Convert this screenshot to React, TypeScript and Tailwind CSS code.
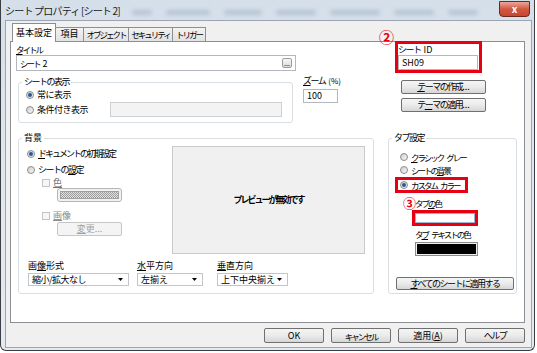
import React from "react";

const KN = "tracking-[-1.5px]";
const KS = "text-[8.5px] tracking-[-2px]";

const U = ({ children }: { children: React.ReactNode }) => (
  <span className="underline underline-offset-[1px]">{children}</span>
);

const Sp = () => <span className="inline-block w-[3px]" />;

function Radio({ checked }: { checked?: boolean }) {
  return (
    <span className="w-[8px] h-[8px] rounded-full border border-[#8b8b8b] bg-linear-to-br from-[#cfcfcf] to-[#f7f7f7] flex items-center justify-center shrink-0">
      {checked && <span className="w-[4px] h-[4px] rounded-full bg-[#24599a]" />}
    </span>
  );
}

function Check() {
  return <span className="w-[8px] h-[8px] border border-[#c4c4c4] bg-[#f6f6f6] shrink-0" />;
}

function Btn({ className, children, disabled }: { className?: string; children: React.ReactNode; disabled?: boolean }) {
  return (
    <div
      className={`flex items-center justify-center whitespace-nowrap rounded-[2px] border ${
        disabled
          ? "border-[#c6c6c6] bg-[#f4f4f4] text-[#a2a2a2]"
          : "border-[#707070] bg-linear-to-b from-[#f5f5f5] via-[#ebebeb] to-[#d6d6d6]"
      } ${className ?? ""}`}
    >
      {children}
    </div>
  );
}

function Select({ className, value }: { className?: string; value: string }) {
  return (
    <div className={`flex items-center justify-between border border-[#c2c6cc] bg-white pl-[3px] pr-[5px] ${className ?? ""}`}>
      <span className="whitespace-nowrap">{value}</span>
      <svg width="5" height="3" viewBox="0 0 5 3">
        <path d="M0 0 H5 L2.5 3 Z" fill="#000" />
      </svg>
    </div>
  );
}

const TAB = "h-[14px] border-t border-r border-[#8c8e94] bg-linear-to-b from-[#f3f3f3] to-[#e2e2e2] flex items-center justify-center pb-[1px]";

export default function App() {
  return (
    <div className="w-[537px] h-[353px] bg-white overflow-hidden text-black text-[9px] leading-[12px] font-['Noto_Sans_CJK_JP',sans-serif]">
      <div className="w-[535px] h-[351px] flex flex-col border-x border-b border-[#3a3f45] rounded-b-[6px] bg-linear-to-b from-[#d5dfea] via-[#e1e7ee] to-[#e6eaef]">
        {/* title bar */}
        <div className="h-[20px] flex items-start shrink-0">
          <div className="ml-[4px] mt-[4px] text-[10px] leading-[14px] tracking-[-0.8px] text-[#1a1a1a] whitespace-nowrap">シート プロパティ [シート 2]</div>
          <div className="flex items-center mt-[10px] ml-[12px] gap-[14px] opacity-60">
            <span className="w-[20px] h-[5px] rounded-full bg-[#9fb0c2] blur-[2px]" />
            <span className="w-[44px] h-[5px] rounded-full bg-[#9fb0c2] blur-[2px]" />
            <span className="w-[38px] h-[5px] rounded-full bg-[#9fb0c2] blur-[2px]" />
            <span className="w-[40px] h-[5px] rounded-full bg-[#9fb0c2] blur-[2px]" />
            <span className="w-[50px] h-[5px] rounded-full bg-[#9fb0c2] blur-[2px]" />
            <span className="w-[40px] h-[5px] rounded-full bg-[#9fb0c2] blur-[2px]" />
            <span className="w-[30px] h-[5px] rounded-full bg-[#9fb0c2] blur-[2px]" />
          </div>
          <div className="ml-auto mr-[4px] mt-[1px] w-[31px] h-[16px] rounded-b-[4px] border border-[#6b2a20] bg-linear-to-b from-[#e9a897] via-[#d05843] to-[#c9452f] flex items-center justify-center text-white text-[10px] font-bold leading-none">
            x
          </div>
        </div>

        {/* client */}
        <div className="ml-[4px] w-[527px] h-[328px] border border-[#9aa5b1] bg-[#f0f0f0] flex flex-col">
          {/* tabs */}
          <div className="h-[20px] flex items-end pl-[6px] shrink-0 whitespace-nowrap">
            <div className="relative z-10 -mb-px w-[44px] h-[19px] border-x border-t border-[#8c8e94] bg-white flex items-center justify-center">
              基本設定
            </div>
            <div className={`w-[28px] ${TAB}`}>項目</div>
            <div className={`w-[45px] ${TAB}`}>
              <span className={KS}>オブジェクト</span>
            </div>
            <div className={`w-[44px] ${TAB}`}>
              <span className={KS}>セキュリティ</span>
            </div>
            <div className={`w-[33px] ${TAB}`}>
              <span className={KS}>トリガー</span>
            </div>
          </div>

          {/* panel */}
          <div className="ml-[4px] w-[515px] h-[282px] border border-[#8c8e94] bg-white flex flex-col shrink-0">
            {/* top section */}
            <div className="flex">
              <div className="ml-[5px] w-[322px] flex flex-col">
                <div className={`mt-[1px] h-[12px] ${KS}`}>
                  <U>タ</U>イトル
                </div>
                <div className="w-[280px] h-[16px] border border-[#b3b7be] bg-white flex items-center justify-between pl-[3px] pr-[3px]">
                  <span className="whitespace-nowrap">
                    <span className={KS}>シート</span>
                    <Sp />2
                  </span>
                  <span className="w-[10px] h-[10px] border border-[#9c9c9c] rounded-[2px] bg-linear-to-b from-[#f7f7f7] to-[#dcdcdc] flex items-end justify-center text-[7px] leading-[7px]">
                    ...
                  </span>
                </div>
                <div className="mt-[5px] flex items-start">
                  <fieldset className="ml-[2px] w-[275px] h-[47px] border border-[#d9dee3] rounded-[3px] pl-[7px] pb-[4px]">
                    <legend className={`ml-[-4px] px-[2px] leading-[12px] ${KN}`}>シートの表示</legend>
                    <div className="mt-[1px] h-[12px] flex items-center gap-[3px]">
                      <Radio checked />
                      <span className="tracking-[-0.5px]">常に表示</span>
                    </div>
                    <div className="mt-[1px] flex items-center">
                      <div className="w-[84px] flex items-center gap-[3px]">
                        <Radio />
                        <span className="tracking-[-0.5px]">条件付き表示</span>
                      </div>
                      <div className="w-[172px] h-[15px] border border-[#cdd0d4] bg-[#f3f3f3]" />
                    </div>
                  </fieldset>
                  <div className="ml-[10px] w-[35px] flex flex-col">
                    <div className="-mt-px h-[12px] whitespace-nowrap">
                      <span className={KN}>
                        <U>ズ</U>ーム
                      </span>
                      <Sp />
                      <span className="text-[8px]">(%)</span>
                    </div>
                    <div className="mt-[2px] h-[14px] border border-[#b3b7be] bg-white pl-[3px] flex items-center">100</div>
                  </div>
                </div>
              </div>

              <div className="relative ml-[57px] -mt-px flex flex-col">
                <span className="absolute left-[-16px] top-[-12px] text-[15px] leading-[15px] font-bold text-[#e60012]">②</span>
                <div className="w-[87px] h-[32px] border-[3px] border-[#e60012] flex flex-col">
                  <div className="h-[11px] leading-[11px] whitespace-nowrap">
                    <span className={KN}>シート</span>
                    <Sp />
                    ID
                  </div>
                  <div className="w-[80px] h-[15px] border border-[#b3b7be] bg-white pl-[3px] flex items-center">SH09</div>
                </div>
                <Btn className="mt-[7px] ml-[6px] w-[85px] h-[14px]">
                  <span className={KN}>
                    <U>テ</U>ーマの作成
                  </span>
                  <span>...</span>
                </Btn>
                <Btn className="mt-[4px] ml-[6px] w-[85px] h-[14px]">
                  <span className={KN}>
                    テ<U>ー</U>マの適用
                  </span>
                  <span>...</span>
                </Btn>
              </div>
            </div>

            {/* bottom section */}
            <div className="mt-[9px] flex">
              <fieldset className="ml-[7px] w-[356px] h-[162px] border border-[#d9dee3] rounded-[3px]">
                <legend className="ml-[3px] px-[2px] leading-[12px]">背景</legend>
                <div className="flex">
                  <div className="ml-[8px] w-[145px] flex flex-col">
                    <div className="mt-[4px] h-[12px] flex items-center gap-[3px] whitespace-nowrap">
                      <Radio checked />
                      <span className="tracking-[-2px]">
                        <U>ド</U>キュメントの初期設定
                      </span>
                    </div>
                    <div className="mt-[4px] h-[12px] flex items-center gap-[3px]">
                      <Radio />
                      <span className={KN}>
                        シートの<U>設</U>定
                      </span>
                    </div>
                    <div className="mt-[1px] ml-[15px] h-[12px] flex items-center gap-[3px] text-[#6e6e6e]">
                      <Check />
                      <U>色</U>
                    </div>
                    <div className="-mt-px ml-[30px] w-[65px] h-[14px] rounded-[3px] border border-[#b5b5b5] bg-[#f2f2f2] p-[2px]">
                      <div className="w-full h-full border border-[#a0a0a0] bg-[image:repeating-conic-gradient(#9c9c9c_0%_25%,#e2e2e2_0%_50%)] bg-[length:2px_2px]" />
                    </div>
                    <div className="mt-[8px] ml-[15px] h-[12px] flex items-center gap-[3px] text-[#8a8a8a]">
                      <Check />
                      <span>
                        <U>画</U>像
                      </span>
                    </div>
                    <Btn disabled className="ml-[30px] w-[65px] h-[14px]">
                      <span>
                        <U>変</U>更...
                      </span>
                    </Btn>
                  </div>
                  <div className="mt-[2px] w-[193px] h-[108px] border border-[#cacaca] bg-[#f0f0f0] flex items-center justify-center font-bold">
                    <span className="tracking-[-2px]">プレビューが無効です</span>
                  </div>
                </div>
                <div className="mt-[6px] pl-[9px] flex">
                  <div className="w-[101px] flex flex-col">
                    <div className="h-[12px]">
                      画<U>像</U>形式
                    </div>
                    <Select className="mt-[1px] h-[13px] tracking-[-0.5px]" value="縮小/拡大なし" />
                  </div>
                  <div className="ml-[8px] w-[66px] flex flex-col">
                    <div className="h-[12px]">
                      <U>水</U>平方向
                    </div>
                    <Select className="mt-[1px] h-[13px]" value="左揃え" />
                  </div>
                  <div className="ml-[14px] w-[71px] flex flex-col">
                    <div className="h-[12px]">
                      <U>垂</U>直方向
                    </div>
                    <Select className="mt-[1px] h-[13px]" value="上下中央揃え" />
                  </div>
                </div>
              </fieldset>

              <fieldset className="ml-[14px] w-[129px] h-[162px] border border-[#d9dee3] rounded-[3px] pl-[6px]">
                <legend className={`ml-[-3px] px-[2px] leading-[12px] ${KN}`}>タブ設定</legend>
                <div className="mt-[7px] pl-[5px] h-[12px] flex items-center gap-[3px] whitespace-nowrap">
                  <Radio />
                  <span>
                    <span className={KS}>
                      <U>ク</U>ラシック
                    </span>
                    <Sp />
                    <span className={KS}>グレー</span>
                  </span>
                </div>
                <div className="mt-[1px] pl-[5px] h-[12px] flex items-center gap-[3px]">
                  <Radio />
                  <span className={KS}>
                    シートの<U>背</U>景
                  </span>
                </div>
                <div className="mt-[1px] w-[73px] h-[16px] border-[3px] border-[#e60012] pl-[2px] flex items-center gap-[3px] whitespace-nowrap">
                  <Radio checked />
                  <span className="leading-[10px]">
                    <span className={KS}>カスタム</span>
                    <Sp />
                    <span className={KS}>カラー</span>
                  </span>
                </div>
                <div className="relative mt-[4px] ml-[20px] h-[12px]">
                  <span className="absolute left-[-12px] top-[-1px] text-[13px] leading-[13px] font-bold text-[#e60012]">③</span>
                  <span className={KS}>
                    タブ<U>の</U>色
                  </span>
                </div>
                <div className="mt-[1px] ml-[17px] w-[66px] h-[16px] border-[3px] border-[#e60012]">
                  <div className="w-full h-full border border-[#9fb3cc] bg-white" />
                </div>
                <div className="mt-[2px] ml-[20px] h-[12px] whitespace-nowrap">
                  <span className={KS}>
                    タ<U>ブ</U>
                  </span>
                  <Sp />
                  <span className={KS}>テキストの色</span>
                </div>
                <div className="mt-[2px] ml-[20px] w-[63px] h-[14px] border border-[#8a8a8a] bg-[#f0f0f0] p-[1px]">
                  <div className="w-full h-full bg-black" />
                </div>
                <Btn className="mt-[21px] ml-[1px] w-[118px] h-[13px]">
                  <span className={KN}>
                    <U>す</U>べてのシートに適用する
                  </span>
                </Btn>
              </fieldset>
            </div>
          </div>

          {/* bottom buttons */}
          <div className="mt-[5px] h-[15px] flex justify-end gap-[7px] pr-[6px]">
            <Btn className="w-[60px] h-[15px]">OK</Btn>
            <Btn className="w-[60px] h-[15px]">
              <span className={KS}>キャンセル</span>
            </Btn>
            <Btn className="w-[60px] h-[15px]">
              <span>
                適用(<U>A</U>)
              </span>
            </Btn>
            <Btn className="w-[60px] h-[15px]">
              <span className={KN}>ヘルプ</span>
            </Btn>
          </div>
        </div>
      </div>
    </div>
  );
}
